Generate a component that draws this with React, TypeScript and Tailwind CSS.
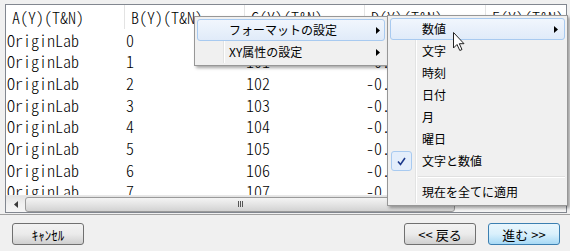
import React from "react";

const cols = [
  { name: "A(Y)(T&N)", w: "w-[119px]" },
  { name: "B(Y)(T&N)", w: "w-[120px]" },
  { name: "C(Y)(T&N)", w: "w-[120px]" },
  { name: "D(Y)(T&N)", w: "w-[121px]" },
  { name: "E(Y)(T&N)", w: "w-[120px]" },
];

const rows = [
  ["OriginLab", "0", "100", "-0.00000", "1.00000"],
  ["OriginLab", "1", "101", "-0.84147", "0.54030"],
  ["OriginLab", "2", "102", "-0.90930", "-0.41615"],
  ["OriginLab", "3", "103", "-0.14112", "-0.98999"],
  ["OriginLab", "4", "104", "-0.75680", "-0.65364"],
  ["OriginLab", "5", "105", "-0.95892", "0.28366"],
  ["OriginLab", "6", "106", "-0.27942", "0.96017"],
  ["OriginLab", "7", "107", "-0.65699", "0.75390"],
];

const subItems = ["数値", "文字", "時刻", "日付", "月", "曜日", "文字と数値"];

const Arrow = () => (
  <svg width="4" height="7" viewBox="0 0 4 7">
    <polygon points="0,0 4,3.5 0,7" fill="#000" />
  </svg>
);

const Button = ({ label, primary }: { label: string; primary?: boolean }) => (
  <button
    className={
      primary
        ? "w-[72px] h-[22px] rounded-[3px] border border-[#3c7fb1] bg-gradient-to-b from-[#eaf6fd] via-[#d9f0fc] to-[#a7d9f5] text-[13px] leading-none text-black"
        : "w-[72px] h-[22px] rounded-[3px] border border-[#707070] bg-gradient-to-b from-[#f2f2f2] via-[#ebebeb] to-[#cfcfcf] text-[13px] leading-none text-black"
    }
  >
    {label}
  </button>
);

const gridFont =
  "font-['Noto_Sans_CJK_JP',monospace] font-light text-[16px] leading-none [font-feature-settings:'hwid'] text-black";

const App: React.FC = () => {
  return (
    <div className="relative w-[570px] h-[251px] overflow-hidden bg-[#f0f0f0] pt-[4px] font-['Noto_Sans_CJK_JP',sans-serif]">
      {/* Worksheet grid */}
      <div className="ml-[5px] w-[562px] h-[209px] border border-[#828790] bg-white flex flex-col overflow-hidden">
        <div className={`flex h-[24px] shrink-0 ${gridFont}`}>
          {cols.map((c) => (
            <div key={c.name} className={`${c.w} shrink-0 pl-[6px] flex items-center border-r border-[#e3e3e3]`}>
              {c.name}
            </div>
          ))}
        </div>
        <div className={`flex-1 overflow-hidden ${gridFont}`}>
          {rows.map((r, i) => (
            <div key={i} className="flex h-[21.65px] items-center">
              {r.map((v, j) => (
                <div key={j} className={`${cols[j].w} shrink-0 pl-[1px] whitespace-nowrap`}>
                  {v}
                </div>
              ))}
            </div>
          ))}
        </div>
        {/* horizontal scrollbar */}
        <div className="h-[17px] shrink-0 flex items-center bg-gradient-to-b from-[#e3e3e3] via-[#f0f0f0] to-[#f5f5f5] border-t border-[#e8e8e8]">
          <div className="w-[19px] flex justify-center">
            <svg width="4" height="7" viewBox="0 0 4 7">
              <polygon points="4,0 0,3.5 4,7" fill="#3a3a3a" />
            </svg>
          </div>
          <div className="w-[430px] h-[15px] rounded-[3px] border border-[#9a9a9a] bg-gradient-to-b from-[#f4f4f4] via-[#e4e4e4] to-[#d2d2d2] flex items-center justify-center gap-[1px]">
            <span className="w-[1px] h-[6px] bg-[#555]" />
            <span className="w-[1px] h-[6px] bg-[#555]" />
            <span className="w-[1px] h-[6px] bg-[#555]" />
          </div>
        </div>
      </div>

      <div className="mt-[1px] h-[2px] border-t border-[#a0a0a0] border-b-white" />

      {/* Buttons */}
      <div className="mt-[7px] flex items-center pl-[12px] pr-[10px]">
        <Button label="ｷｬﾝｾﾙ" />
        <div className="ml-auto flex gap-[12px]">
          <Button label="<< 戻る" />
          <Button label="進む >>" primary />
        </div>
      </div>

      {/* Context menu */}
      <div className="absolute left-[194px] top-[16px] w-[194px] border border-[#979797] bg-[#f0f0f0] py-[2px] px-[2px] shadow-[2px_2px_3px_rgba(0,0,0,0.35)] text-[12px] text-black">
        <div className="absolute top-[2px] bottom-[2px] left-[28px] w-[2px] border-l border-[#e2e3e3] border-r border-r-white" />
        <div className="relative h-[22px] flex items-center rounded-[3px] border border-[#a8caf0] bg-gradient-to-b from-[#f1f6fd] to-[#e0ebf9]">
          <span className="ml-[31px] flex-1">フォーマットの設定</span>
          <span className="mr-[4px] flex"><Arrow /></span>
        </div>
        <div className="relative h-[22px] flex items-center border border-transparent">
          <span className="ml-[31px] flex-1">XY属性の設定</span>
          <span className="mr-[4px] flex"><Arrow /></span>
        </div>
      </div>

      {/* Submenu */}
      <div className="absolute left-[387px] top-[15px] w-[181px] border border-[#979797] bg-[#f0f0f0] py-[2px] px-[2px] shadow-[2px_2px_3px_rgba(0,0,0,0.35)] text-[12px] text-black">
        <div className="absolute top-[2px] bottom-[2px] left-[27px] w-[2px] border-l border-[#e2e3e3] border-r border-r-white" />
        {subItems.map((s, i) => (
          <div
            key={s}
            className={
              i === 0
                ? "relative h-[22px] flex items-center rounded-[3px] border border-[#a8caf0] bg-gradient-to-b from-[#f1f6fd] to-[#e0ebf9]"
                : "relative h-[22px] flex items-center border border-transparent"
            }
          >
            {i === 6 && (
              <span className="absolute left-[0px] top-[0px] w-[21px] h-[20px] rounded-[3px] border border-[#a8caf0] bg-[#e4eefb] flex items-center justify-center">
                <svg width="9" height="9" viewBox="0 0 9 9">
                  <path d="M1 4.5 L3.5 7.5 L8 1" stroke="#1d3a8c" strokeWidth="1.6" fill="none" />
                </svg>
              </span>
            )}
            <span className="ml-[31px] flex-1">{s}</span>
            {i === 0 && <span className="mr-[6px] flex"><Arrow /></span>}
          </div>
        ))}
        <div className="relative h-[9px] flex items-center">
          <div className="ml-[28px] flex-1 h-[2px] border-t border-[#e0e0e0] border-b border-b-white" />
        </div>
        <div className="relative h-[22px] flex items-center border border-transparent">
          <span className="ml-[31px]">現在を全てに適用</span>
        </div>
      </div>

      {/* Mouse pointer */}
      <svg className="absolute left-[453px] top-[32px]" width="13" height="20" viewBox="0 0 13 20">
        <path d="M0.5 0.5 L0.5 16 L4 12.5 L6.8 18.5 L9 17.5 L6.3 11.7 L11 11.7 Z" fill="#fff" stroke="#222" strokeWidth="1" strokeLinejoin="round" />
      </svg>
    </div>
  );
};

export default App;
